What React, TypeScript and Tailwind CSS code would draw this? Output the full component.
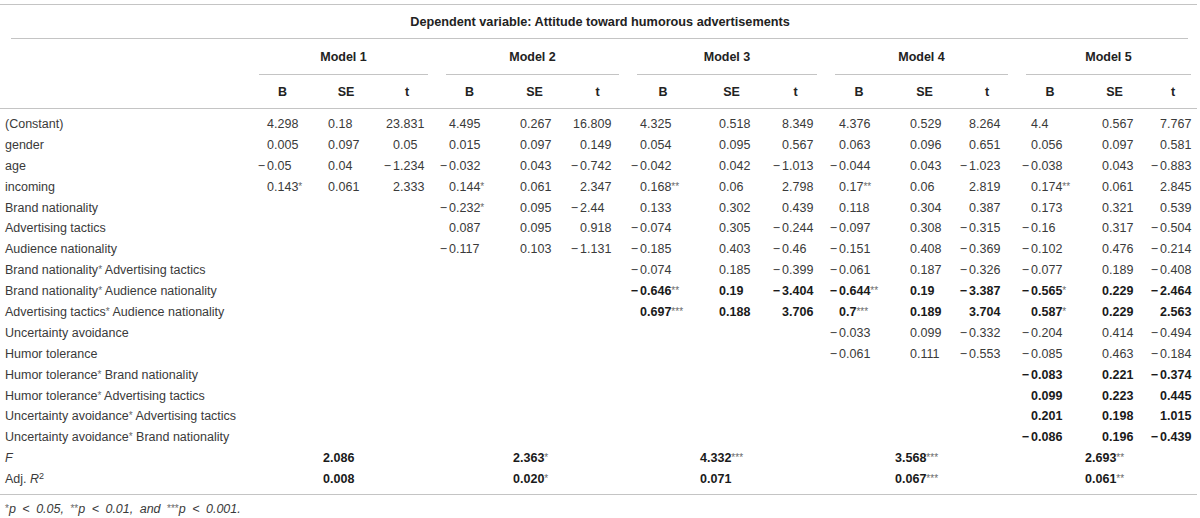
import React from "react";

type Row = { label: string; vals: string[]; bold?: number[] };

const rows: Row[] = [
  { label: "(Constant)", vals: ["4.298", "0.18", "23.831", "4.495", "0.267", "16.809", "4.325", "0.518", "8.349", "4.376", "0.529", "8.264", "4.4", "0.567", "7.767"] },
  { label: "gender", vals: ["0.005", "0.097", "0.05", "0.015", "0.097", "0.149", "0.054", "0.095", "0.567", "0.063", "0.096", "0.651", "0.056", "0.097", "0.581"] },
  { label: "age", vals: ["−0.05", "0.04", "−1.234", "−0.032", "0.043", "−0.742", "−0.042", "0.042", "−1.013", "−0.044", "0.043", "−1.023", "−0.038", "0.043", "−0.883"] },
  { label: "incoming", vals: ["0.143*", "0.061", "2.333", "0.144*", "0.061", "2.347", "0.168**", "0.06", "2.798", "0.17**", "0.06", "2.819", "0.174**", "0.061", "2.845"] },
  { label: "Brand nationality", vals: ["", "", "", "−0.232*", "0.095", "−2.44", "0.133", "0.302", "0.439", "0.118", "0.304", "0.387", "0.173", "0.321", "0.539"] },
  { label: "Advertising tactics", vals: ["", "", "", "0.087", "0.095", "0.918", "−0.074", "0.305", "−0.244", "−0.097", "0.308", "−0.315", "−0.16", "0.317", "−0.504"] },
  { label: "Audience nationality", vals: ["", "", "", "−0.117", "0.103", "−1.131", "−0.185", "0.403", "−0.46", "−0.151", "0.408", "−0.369", "−0.102", "0.476", "−0.214"] },
  { label: "Brand nationality* Advertising tactics", vals: ["", "", "", "", "", "", "−0.074", "0.185", "−0.399", "−0.061", "0.187", "−0.326", "−0.077", "0.189", "−0.408"] },
  { label: "Brand nationality* Audience nationality", vals: ["", "", "", "", "", "", "−0.646**", "0.19", "−3.404", "−0.644**", "0.19", "−3.387", "−0.565*", "0.229", "−2.464"], bold: [6, 7, 8, 9, 10, 11, 12, 13, 14] },
  { label: "Advertising tactics* Audience nationality", vals: ["", "", "", "", "", "", "0.697***", "0.188", "3.706", "0.7***", "0.189", "3.704", "0.587*", "0.229", "2.563"], bold: [6, 7, 8, 9, 10, 11, 12, 13, 14] },
  { label: "Uncertainty avoidance", vals: ["", "", "", "", "", "", "", "", "", "−0.033", "0.099", "−0.332", "−0.204", "0.414", "−0.494"] },
  { label: "Humor tolerance", vals: ["", "", "", "", "", "", "", "", "", "−0.061", "0.111", "−0.553", "−0.085", "0.463", "−0.184"] },
  { label: "Humor tolerance* Brand nationality", vals: ["", "", "", "", "", "", "", "", "", "", "", "", "−0.083", "0.221", "−0.374"], bold: [12, 13, 14] },
  { label: "Humor tolerance* Advertising tactics", vals: ["", "", "", "", "", "", "", "", "", "", "", "", "0.099", "0.223", "0.445"], bold: [12, 13, 14] },
  { label: "Uncertainty avoidance* Advertising tactics", vals: ["", "", "", "", "", "", "", "", "", "", "", "", "0.201", "0.198", "1.015"], bold: [12, 13, 14] },
  { label: "Uncertainty avoidance* Brand nationality", vals: ["", "", "", "", "", "", "", "", "", "", "", "", "−0.086", "0.196", "−0.439"], bold: [12, 13, 14] },
];

const intW = [
  "w-[24px]", "w-[20px]", "w-[23px]",
  "w-[19px]", "w-[25px]", "w-[20px]",
  "w-[19px]", "w-[28px]", "w-[24px]",
  "w-[20px]", "w-[25px]", "w-[19px]",
  "w-[21px]", "w-[26px]", "w-[21px]",
];

const groupIntW = ["w-[80px]", "w-[83px]", "w-[79px]", "w-[76px]", "w-[75px]"];

const starCls = "text-[10px] relative top-[-1px] text-[#6a6a6a] font-normal not-italic";

function Stars({ s }: { s: string }) {
  if (!s) return null;
  return <span className={starCls}>{s}</span>;
}

function Num({ v, w }: { v: string; w: string }) {
  if (!v) return <span />;
  const m = v.match(/^(−?)(\d+)(\.\d+)?(\**)$/);
  if (!m) return <span>{v}</span>;
  const [, neg, int, frac, stars] = m;
  return (
    <span className="flex whitespace-nowrap">
      <span className={`${w} inline-block text-right shrink-0`}>
        {neg && <span className="pr-[2px]">{neg}</span>}
        {int}
      </span>
      <span>{frac}</span>
      <Stars s={stars} />
    </span>
  );
}

function Label({ text }: { text: string }) {
  const parts = text.split("*");
  if (parts.length === 1) return <>{text}</>;
  return (
    <>
      {parts[0]}
      <span className={starCls}>*</span>
      {parts[1]}
    </>
  );
}

const cols =
  "grid grid-cols-[250px_65px_62px_60px_65px_65px_61px_70px_67px_61px_66px_65px_60px_66px_63px_54px]";
const groups = "grid grid-cols-[250px_187px_191px_198px_191px_183px]";

export default function App() {
  return (
    <div
      className="w-[1200px] h-[518px] bg-white text-[#3a3a3a] text-[12.5px] leading-[15px] overflow-hidden pt-[4px]"
      style={{ fontFamily: '"Liberation Sans", Arial, Helvetica, sans-serif' }}
    >
      <div className="border-t border-[#c4c4c4] mr-[3px]" />
      <div className="h-[33px] pt-[1px] flex items-center justify-center font-bold text-[12.7px] text-[#222]">
        Dependent variable: Attitude toward humorous advertisements
      </div>
      <div className="border-t border-[#c4c4c4] ml-[11px] mr-[12px]" />
      <div className={groups}>
        <div />
        {["Model 1", "Model 2", "Model 3", "Model 4", "Model 5"].map((m) => (
          <div key={m} className="flex flex-col">
            <div className="h-[35px] pt-[2px] flex items-center justify-center font-bold text-[#222]">{m}</div>
            <div className="border-t border-[#c4c4c4] mx-[9px]" />
          </div>
        ))}
      </div>
      <div className={cols + " h-[33px] pt-[2px] items-center font-bold text-[#222]"}>
        <div />
        {Array.from({ length: 5 }).flatMap((_, i) =>
          ["B", "SE", "t"].map((h) => (
            <div key={i + h} className="text-center">
              {h}
            </div>
          ))
        )}
      </div>
      <div className="border-t border-[#c4c4c4] mr-[3px]" />
      <div className="pt-[5px]">
        {rows.map((r, ri) => (
          <div key={ri} className={cols + " h-[20.9px] items-center"}>
            <div className="pl-[5px] whitespace-nowrap">
              <Label text={r.label} />
            </div>
            {r.vals.map((v, ci) => (
              <div
                key={ci}
                className={r.bold && r.bold.includes(ci) ? "font-bold text-[#1a1a1a]" : ""}
              >
                <Num v={v} w={intW[ci]} />
              </div>
            ))}
          </div>
        ))}
        <div className={groups + " h-[20.9px] items-center font-bold text-[#1a1a1a]"}>
          <div className="pl-[5px] italic font-normal text-[#3a3a3a]">F</div>
          {["2.086", "2.363*", "4.332***", "3.568***", "2.693**"].map((v, i) => (
            <div key={i}>
              <Num v={v} w={groupIntW[i]} />
            </div>
          ))}
        </div>
        <div className={groups + " h-[20.9px] items-center font-bold text-[#1a1a1a]"}>
          <div className="pl-[5px] font-normal text-[#3a3a3a]">
            Adj. <span className="italic">R</span>
            <span className="text-[9px] relative top-[-4px]">2</span>
          </div>
          {["0.008", "0.020*", "0.071", "0.067***", "0.061**"].map((v, i) => (
            <div key={i}>
              <Num v={v} w={groupIntW[i]} />
            </div>
          ))}
        </div>
      </div>
      <div className="border-t border-[#c4c4c4] mt-[4px] mr-[3px]" />
      <div className="pl-[5px] pt-[7px] italic text-[12.5px] text-[#3a3a3a] whitespace-nowrap [word-spacing:3px]">
        <span className={starCls}>*</span>p {"<"} 0.05,{" "}
        <span className={starCls}>**</span>p {"<"} 0.01, and{" "}
        <span className={starCls}>***</span>p {"<"} 0.001.
      </div>
    </div>
  );
}
